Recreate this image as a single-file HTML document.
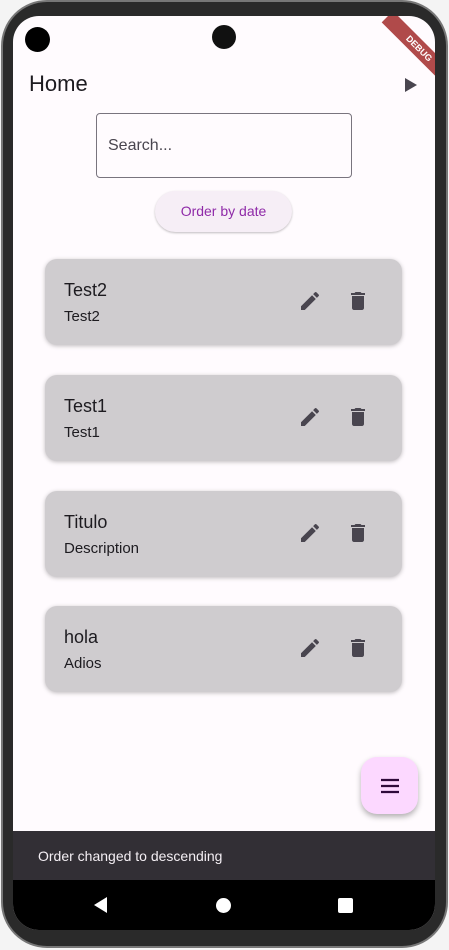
<!DOCTYPE html>
<html><head><meta charset="utf-8"><style>
*{margin:0;padding:0;box-sizing:border-box}
body{width:449px;height:950px;background:#f4f4f4;position:relative;overflow:hidden;font-family:"Liberation Sans",sans-serif}
.frame{position:absolute;left:1px;top:0;width:447px;height:948px;border-radius:46px;background:#2a2a2a;border:2px solid #777}
.screen{position:absolute;left:13px;top:16px;width:422px;height:914px;border-radius:26px;background:#fffbfe;overflow:hidden}
.abs{position:absolute}
.card{position:absolute;left:32px;width:357px;height:86px;background:#cfcccf;border-radius:12px;box-shadow:0 1px 4px rgba(0,0,0,.25)}
.t{position:absolute;left:19px;top:21px;font-size:18px;color:#1d1b20}
.s{position:absolute;left:19px;top:49px;font-size:15px;color:#1d1b20}
.ic{position:absolute;top:30px}
</style></head><body>
<div class="frame"></div>
<div class="screen">
  <div class="abs" style="left:12px;top:11px;width:25px;height:25px;border-radius:50%;background:#000"></div>
  <div class="abs" style="left:199px;top:9px;width:24px;height:24px;border-radius:50%;background:#111"></div>
  <div class="abs" style="left:360px;top:-2px;width:90px;height:16px;background:#b04a4a;transform:translate(0,20px) rotate(45deg);transform-origin:0 0;color:#fff;font-size:9px;font-weight:bold;text-align:center;line-height:16px;left:380px;top:-25px">DEBUG</div>
  <div class="abs" style="left:16px;top:55px;font-size:22px;color:#1d1b20">Home</div>
  <svg class="abs" style="left:391px;top:61px" width="14" height="16"><path d="M1 1L13 8L1 15Z" fill="#49454f"/></svg>
  <div class="abs" style="left:83px;top:97px;width:256px;height:65px;border:1px solid #79747e;border-radius:4px"></div>
  <div class="abs" style="left:95px;top:121px;font-size:16px;color:#49454f">Search...</div>
  <div class="abs" style="left:142px;top:175px;width:137px;height:41px;border-radius:21px;background:#f6eef6;box-shadow:0 1px 2px rgba(0,0,0,.25);color:#8f2aa8;font-size:14px;text-align:center;line-height:41px">Order by date</div>

  <div class="card" style="top:243px"><div class="t">Test2</div><div class="s">Test2</div>
    <svg class="ic" style="left:253px" width="24" height="24" viewBox="0 0 24 24"><path d="M3 17.25V21h3.75L17.81 9.94l-3.75-3.75L3 17.25zM20.71 7.04a1 1 0 000-1.41l-2.340-2.34a1 1 0 00-1.41 0l-1.83 1.83 3.75 3.75 1.83-1.83z" fill="#49454f"/></svg>
    <svg class="ic" style="left:301px" width="24" height="24" viewBox="0 0 24 24"><path d="M6 19c0 1.1.9 2 2 2h8c1.1 0 2-.9 2-2V7H6v12zM19 4h-3.5l-1-1h-5l-1 1H5v2h14V4z" fill="#49454f"/></svg></div>
  <div class="card" style="top:359px"><div class="t">Test1</div><div class="s">Test1</div>
    <svg class="ic" style="left:253px" width="24" height="24" viewBox="0 0 24 24"><path d="M3 17.25V21h3.75L17.81 9.94l-3.75-3.75L3 17.25zM20.71 7.04a1 1 0 000-1.41l-2.34-2.34a1 1 0 00-1.41 0l-1.83 1.83 3.75 3.75 1.83-1.83z" fill="#49454f"/></svg>
    <svg class="ic" style="left:301px" width="24" height="24" viewBox="0 0 24 24"><path d="M6 19c0 1.1.9 2 2 2h8c1.1 0 2-.9 2-2V7H6v12zM19 4h-3.5l-1-1h-5l-1 1H5v2h14V4z" fill="#49454f"/></svg></div>
  <div class="card" style="top:475px"><div class="t">Titulo</div><div class="s">Description</div>
    <svg class="ic" style="left:253px" width="24" height="24" viewBox="0 0 24 24"><path d="M3 17.25V21h3.75L17.81 9.94l-3.75-3.75L3 17.25zM20.71 7.04a1 1 0 000-1.41l-2.34-2.34a1 1 0 00-1.41 0l-1.83 1.83 3.75 3.75 1.83-1.83z" fill="#49454f"/></svg>
    <svg class="ic" style="left:301px" width="24" height="24" viewBox="0 0 24 24"><path d="M6 19c0 1.1.9 2 2 2h8c1.1 0 2-.9 2-2V7H6v12zM19 4h-3.5l-1-1h-5l-1 1H5v2h14V4z" fill="#49454f"/></svg></div>
  <div class="card" style="top:590px"><div class="t">hola</div><div class="s">Adios</div>
    <svg class="ic" style="left:253px" width="24" height="24" viewBox="0 0 24 24"><path d="M3 17.25V21h3.75L17.81 9.94l-3.75-3.75L3 17.25zM20.71 7.04a1 1 0 000-1.41l-2.34-2.34a1 1 0 00-1.41 0l-1.83 1.83 3.75 3.75 1.83-1.83z" fill="#49454f"/></svg>
    <svg class="ic" style="left:301px" width="24" height="24" viewBox="0 0 24 24"><path d="M6 19c0 1.1.9 2 2 2h8c1.1 0 2-.9 2-2V7H6v12zM19 4h-3.5l-1-1h-5l-1 1H5v2h14V4z" fill="#49454f"/></svg></div>

  <div class="abs" style="left:348px;top:741px;width:57px;height:57px;border-radius:16px;background:#fcd8ff;box-shadow:0 3px 6px rgba(0,0,0,.3)"></div>
  <svg class="abs" style="left:367px;top:760px" width="20" height="20" viewBox="0 0 20 20"><path d="M1 4h18M1 10h18M1 16h18" stroke="#2e0a3a" stroke-width="2.2"/></svg>

  <div class="abs" style="left:0;top:815px;width:422px;height:49px;background:#322f35;color:#f4eff4;font-size:14px;line-height:50px;padding-left:25px">Order changed to descending</div>
  <div class="abs" style="left:0;top:864px;width:422px;height:50px;background:#000"></div>
  <svg class="abs" style="left:80px;top:880px" width="16" height="18"><path d="M14 1L1 9L14 17Z" fill="#fff"/></svg>
  <div class="abs" style="left:203px;top:882px;width:15px;height:15px;border-radius:50%;background:#fff"></div>
  <div class="abs" style="left:325px;top:882px;width:15px;height:15px;border-radius:2px;background:#fff"></div>
</div>
</body></html>
